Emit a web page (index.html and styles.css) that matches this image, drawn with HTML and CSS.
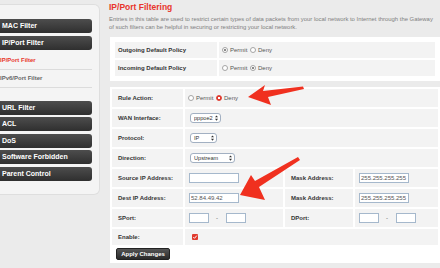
FILE: index.html
```html
<!DOCTYPE html>
<html>
<head lang="en">
    <meta charset="UTF-8">
    <title>IP/Port Filtering</title>
    <link rel="stylesheet" href="styles.css">
</head>
<body>
<div class="page">
    <!-- 左侧菜单 -->
    <div class="side">
        <a class="btn">MAC Filter</a>
        <a class="btn">IP/Port Filter</a>
        <div class="sub">
            <a class="on">IP/Port Filter</a>
            <a>IPv6/Port Filter</a>
        </div>
        <a class="btn">URL Filter</a>
        <a class="btn">ACL</a>
        <a class="btn">DoS</a>
        <a class="btn">Software Forbidden</a>
        <a class="btn last">Parent Control</a>
    </div>
    <!-- 主体 -->
    <div class="main">
        <h1>IP/Port Filtering</h1>
        <p class="desc">Entries in this table are used to restrict certain types of data packets from your local network to Internet through the Gateway<br>of such filters can be helpful in securing or restricting your local network.</p>

        <div class="box policy">
            <table>
                <tr>
                    <th>Outgoing Default Policy</th>
                    <td>
                        <label><input type="radio" name="out" checked> Permit</label>
                        <label><input type="radio" name="out"> Deny</label>
                    </td>
                </tr>
                <tr>
                    <th>Incoming Default Policy</th>
                    <td>
                        <label><input type="radio" name="in"> Permit</label>
                        <label><input type="radio" name="in" checked> Deny</label>
                    </td>
                </tr>
            </table>
        </div>

        <div class="box rule">
            <table>
                <colgroup>
                    <col class="c1"><col class="c2"><col class="c3"><col>
                </colgroup>
                <tr>
                    <th>Rule Action:</th>
                    <td colspan="3">
                        <label><input type="radio" name="act"> Permit</label>
                        <label><input type="radio" name="act" class="red" checked> Deny</label>
                    </td>
                </tr>
                <tr>
                    <th>WAN Interface:</th>
                    <td colspan="3"><span class="sel w31"><select><option>pppoe2</option></select><svg viewBox="0 0 4 7"><path d="M2 0 4 2.6H0ZM2 7 4 4.4H0Z"/></svg></span></td>
                </tr>
                <tr>
                    <th>Protocol:</th>
                    <td colspan="3"><span class="sel w27"><select><option>IP</option></select><svg viewBox="0 0 4 7"><path d="M2 0 4 2.6H0ZM2 7 4 4.4H0Z"/></svg></span></td>
                </tr>
                <tr>
                    <th>Direction:</th>
                    <td colspan="3"><span class="sel w45"><select><option>Upstream</option></select><svg viewBox="0 0 4 7"><path d="M2 0 4 2.6H0ZM2 7 4 4.4H0Z"/></svg></span></td>
                </tr>
                <tr>
                    <th>Source IP Address:</th>
                    <td><input type="text" class="ip"></td>
                    <th>Mask Address:</th>
                    <td><input type="text" class="ip" value="255.255.255.255"></td>
                </tr>
                <tr>
                    <th>Dest IP Address:</th>
                    <td><input type="text" class="ip" value="52.84.49.42"></td>
                    <th>Mask Address:</th>
                    <td><input type="text" class="ip" value="255.255.255.255"></td>
                </tr>
                <tr>
                    <th>SPort:</th>
                    <td><input type="text" class="port"><span class="dash">-</span><input type="text" class="port"></td>
                    <th>DPort:</th>
                    <td><input type="text" class="port"><span class="dash">-</span><input type="text" class="port"></td>
                </tr>
                <tr class="short">
                    <th>Enable:</th>
                    <td colspan="3"><span class="check"><svg viewBox="0 0 6 6"><path d="M1.3 3.1 2.5 4.3 4.8 1.6"/></svg></span></td>
                </tr>
            </table>
            <button class="apply">Apply Changes</button>
        </div>
    </div>
</div>
<!-- 标注箭头 -->
<svg class="marks" viewBox="0 0 440 268">
    <polygon points="248,97 265,85 263,91 303,86.5 304,89 268,97 271,105"/>
    <polygon points="240,195 251,175 255,181 298,157 300,160 259,187 265,200"/>
</svg>
</body>
</html>
```

FILE: styles.css
```css
html{overflow:hidden;}
body{
    margin:0;background:#ebebeb;
    font-family:"Liberation Sans",Arial,sans-serif;color:#333;
}
.page{display:flex;align-items:flex-start;width:440px;}
.side{
    flex:0 0 100px;box-sizing:border-box;margin-top:4px;
    background:#f4f4f4;border:1px solid #dedede;border-left:0;
    border-radius:0 6px 6px 0;
    padding:14px 7px 13px 0;
}
.btn{
    display:block;height:14px;line-height:14px;margin-bottom:2.5px;
    padding-left:2px;border-radius:0 3px 3px 0;
    background:linear-gradient(#4d4d4d,#2f2f2f);
    color:#fff;font-size:7px;font-weight:bold;
}
.btn.last{margin-bottom:0;}
.sub{margin-bottom:12.5px;}
.sub a{
    display:block;height:17px;line-height:17px;
    border-bottom:1px solid #dcdcdc;
    font-size:6px;font-weight:bold;color:#666;
}
.sub a.on{color:#e8352c;}
.main{flex:1;min-width:0;margin-left:10px;padding-top:2px;}
h1{
    margin:0 0 0 -1px;font-size:8.5px;line-height:10px;color:#e8352c;
}
.desc{
    margin:3px 0 0 -1px;font-size:5.9px;line-height:8px;color:#808080;
    white-space:nowrap;
}
.box{background:#fff;}
.box table{width:100%;border-spacing:2px;table-layout:fixed;}
.box th{
    background:#f3f3f3;text-align:left;font-size:6px;font-weight:bold;
    color:#333;padding:0 0 0 3px;white-space:nowrap;
}
.box td{background:#f3f3f3;font-size:6px;color:#555;padding:0 3px;white-space:nowrap;}
.policy{margin-top:6px;padding:3px;}
.policy th{width:99px;height:16px;}
.policy td{height:16px;}
.rule{margin-top:6px;padding:0 0 3px;}
.rule table{margin-bottom:1px;}
.rule th{height:18px;padding-left:6px;}
.rule tr.short th,.rule tr.short td{height:16px;}
.rule col.c1{width:71px;}
.rule col.c2{width:98px;}
.rule col.c3{width:68px;}
label{display:inline-flex;align-items:center;margin-right:1px;}
input[type=radio]{
    appearance:none;-webkit-appearance:none;margin:0 2px 0 0;
    width:6px;height:6px;border-radius:50%;box-sizing:border-box;
    border:1px solid #a5a5a5;background:#fff;
}
input[type=radio]:checked{
    background:radial-gradient(circle,#8a8a8a 0 0.8px,#fff 1.2px);
}
input[type=radio].red:checked{
    border-color:#e03a2e;
    background:radial-gradient(circle,#fff 0 0.9px,#e03a2e 1.3px);
}
.sel{position:relative;display:inline-block;vertical-align:middle;margin-left:2px;}
.sel select{
    appearance:none;-webkit-appearance:none;display:block;box-sizing:border-box;
    height:10px;width:100%;padding:0 0 0 3px;margin:0;
    border:1px solid #a2b0c2;border-radius:3px;background:#fff;
    font:5.6px "Liberation Sans",Arial,sans-serif;color:#333;
}
.sel svg{position:absolute;right:3px;top:2px;width:3px;height:6px;fill:#333;}
.w31{width:31px;}
.w27{width:27px;}
.w45{width:45px;}
input[type=text]{
    box-sizing:border-box;height:10px;margin:0 0 0 1px;padding:0 0 0 1px;
    border:1px solid #a5b8cc;background:#fff;vertical-align:middle;
    font:6px "Liberation Sans",Arial,sans-serif;color:#555;
}
.ip{width:50px;}
.port{width:20px;}
.dash{display:inline-block;width:16px;text-align:center;vertical-align:middle;}
.check{
    display:inline-block;vertical-align:middle;margin-left:4px;
    width:6px;height:6px;border-radius:1px;background:#e03a2e;
}
.check svg{display:block;width:6px;height:6px;fill:none;stroke:#fff;stroke-width:1;}
.apply{
    display:block;margin:0 0 0 6px;height:12px;width:54px;padding:0;
    border:1px solid #222;border-radius:2px;
    background:linear-gradient(#555,#2a2a2a);
    color:#fff;font:bold 6px "Liberation Sans",Arial,sans-serif;
}
.marks{position:absolute;left:0;top:0;width:440px;height:268px;pointer-events:none;}
.marks polygon{fill:#f0301f;}
```
